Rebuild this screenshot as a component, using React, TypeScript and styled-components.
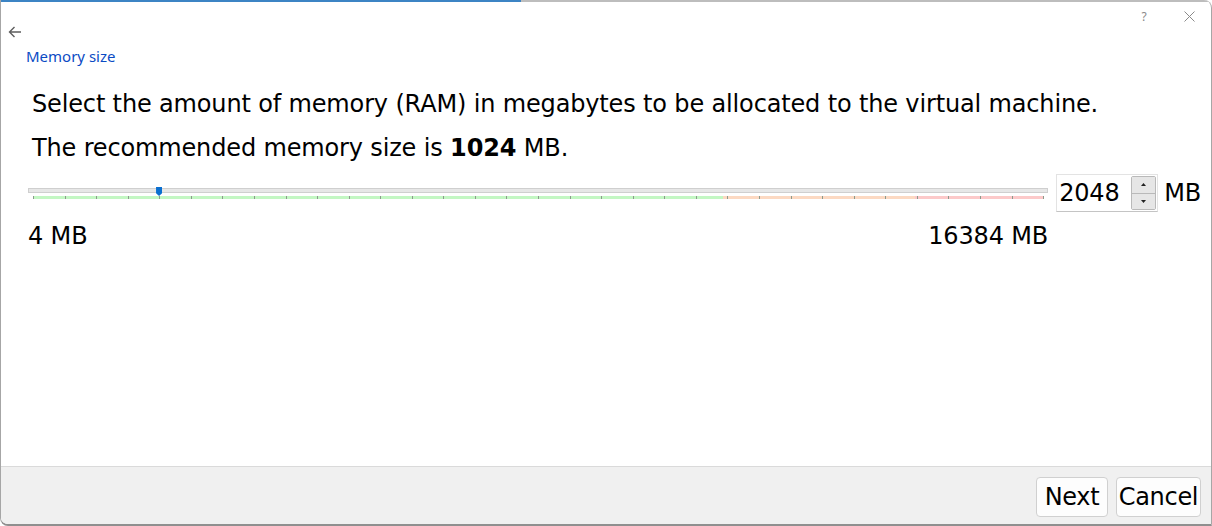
import React from "react";
import styled, { createGlobalStyle } from "styled-components";

const Global = createGlobalStyle`
  html, body { margin: 0; padding: 0; background: #ffffff; }
  body { width: 1212px; height: 526px; overflow: hidden; }
  * { box-sizing: border-box; }
`;

const FONT = `"DejaVu Sans", sans-serif`;

const Page = styled.div`
  width: 1212px;
  height: 526px;
  display: flex;
  flex-direction: column;
  background: #ffffff;
`;

const Dialog = styled.div`
  flex: 1;
  display: flex;
  flex-direction: column;
  border-left: 1px solid #a6a6a6;
  border-right: 1px solid #a6a6a6;
  border-bottom: 2px solid #8f8f8f;
  border-top-right-radius: 8px;
  border-bottom-left-radius: 8px;
  overflow: hidden;
  background: #ffffff;
`;

const TopStrip = styled.div`
  height: 2px;
  display: flex;
  flex: none;
`;

const StripPart = styled.div<{ $color: string; $w?: number }>`
  height: 100%;
  background: ${(p) => p.$color};
  ${(p) => (p.$w ? `width: ${p.$w}px; flex: none;` : "flex: 1;")}
`;

const TitleBar = styled.div`
  height: 36px;
  display: flex;
  flex: none;
  padding: 0 0 0 7px;
`;

const BackButton = styled.div`
  align-self: flex-end;
  width: 14px;
  height: 12px;
  display: flex;
  align-items: center;
`;

const Spacer = styled.div`
  flex: 1;
`;

const TitleButton = styled.div<{ $w: number; $gap?: number }>`
  align-self: flex-start;
  margin-top: 5px;
  margin-right: ${(p) => p.$gap ?? 0}px;
  width: ${(p) => p.$w}px;
  height: 18px;
  display: flex;
  align-items: center;
  justify-content: center;
  color: #8a8a8a;
  font-family: "Noto Sans", sans-serif;
  font-size: 12px;
`;

const PageTitle = styled.div`
  margin: 8px 0 0 25px;
  font-family: "Noto Sans", "Open Sans", sans-serif;
  font-size: 15px;
  line-height: 20px;
  color: #0b4bc4;
`;

const Content = styled.div`
  flex: 1;
  padding: 20px 10px 0 27px;
  font-family: ${FONT};
  font-size: 24px;
  letter-spacing: -0.15px;
  color: #000000;
`;

const Para = styled.p`
  margin: 0 0 8px 4px;
  line-height: 36px;
  b { font-weight: bold; }
`;

const EditorRow = styled.div`
  display: flex;
  align-items: flex-start;
  margin-top: 5px;
`;

const SliderColumn = styled.div`
  flex: 1;
  display: flex;
  flex-direction: column;
  margin-right: 8px;
`;

const Slider = styled.div`
  position: relative;
  height: 38px;
`;

const Track = styled.div`
  position: absolute;
  left: 0;
  right: 0;
  top: 14px;
  height: 5px;
  background: #e7e7e7;
  border: 1px solid #cfcfcf;
`;

const Scale = styled.div`
  position: absolute;
  left: 5px;
  right: 5px;
  top: 22px;
  height: 3px;
`;

const ThumbLane = styled.div`
  position: absolute;
  left: 5px;
  right: 5px;
  top: 13px;
  height: 9px;
`;

const Zone = styled.div<{ $color: string }>`
  position: absolute;
  top: 0;
  height: 3px;
  background: ${(p) => p.$color};
`;

const Tick = styled.div`
  position: absolute;
  top: 0;
  width: 1px;
  height: 3px;
  background: #8c9a8c;
`;

const Thumb = styled.div`
  position: absolute;
  top: 0;
  width: 6px;
  height: 9px;
  margin-left: -3px;
  background: #0a6fd0;
  clip-path: polygon(0 0, 100% 0, 100% 70%, 50% 100%, 0 70%);
`;

const Labels = styled.div`
  display: flex;
  justify-content: space-between;
  line-height: 30px;
  margin-top: 9px;
`;

const SpinBox = styled.div`
  width: 102px;
  height: 38px;
  display: flex;
  align-items: center;
  border: 1px solid #e3e3e3;
  border-bottom-color: #c4c4c4;
  padding: 1px 1px 1px 2px;
  background: #ffffff;
`;

const SpinValue = styled.div`
  flex: 1;
  line-height: 34px;
`;

const SpinButtons = styled.div`
  width: 25px;
  height: 34px;
  display: flex;
  flex-direction: column;
  border: 1px solid #b9b9b9;
  border-radius: 2px;
  overflow: hidden;
`;

const SpinButton = styled.div<{ $top?: boolean }>`
  flex: 1;
  display: flex;
  align-items: center;
  justify-content: center;
  background: #e6e6e6;
  ${(p) => (p.$top ? "border-bottom: 1px solid #b9b9b9;" : "")}
`;

const Unit = styled.div`
  margin-left: 6px;
  line-height: 38px;
`;

const Footer = styled.div`
  height: 58px;
  flex: none;
  display: flex;
  justify-content: flex-end;
  align-items: flex-start;
  gap: 8px;
  padding: 10px 10px 0 0;
  background: #f0f0f0;
  border-top: 1px solid #dadada;
`;

const Button = styled.button<{ $w: number }>`
  width: ${(p) => p.$w}px;
  height: 40px;
  padding: 0;
  font-family: ${FONT};
  font-size: 24px;
  letter-spacing: -0.3px;
  color: #000;
  background: #fdfdfd;
  border: 1px solid #d0d0d0;
  border-radius: 4px;
`;

const MIN = 4;
const MAX = 16384;
const VALUE = 2048;
const GREEN_END = 11200;
const PEACH_END = 14300;
const TICKS = 33;

const pct = (v: number) => ((v - MIN) / (MAX - MIN)) * 100;

export default function App() {
  const ticks = Array.from({ length: TICKS }, (_, i) => (i / (TICKS - 1)) * 100);
  return (
    <>
      <Global />
      <Page>
        <Dialog>
          <TopStrip>
            <StripPart $color="#3c84c4" $w={520} />
            <StripPart $color="#bdbdbd" />
          </TopStrip>
          <TitleBar>
            <BackButton>
              <svg width="14" height="12" viewBox="0 0 14 12">
                <path d="M6.5 1 L1.5 6 L6.5 11 M1.5 6 H13" fill="none" stroke="#5e5e5e" strokeWidth="1.4" />
              </svg>
            </BackButton>
            <Spacer />
            <TitleButton $w={16} $gap={15}>?</TitleButton>
            <TitleButton $w={44}>
              <svg width="11" height="11" viewBox="0 0 11 11">
                <path d="M0.5 0.5 L10.5 10.5 M10.5 0.5 L0.5 10.5" stroke="#8a8a8a" strokeWidth="1" />
              </svg>
            </TitleButton>
          </TitleBar>
          <PageTitle>Memory size</PageTitle>
          <Content>
            <Para>Select the amount of memory (RAM) in megabytes to be allocated to the virtual machine.</Para>
            <Para>
              The recommended memory size is <b>1024</b> MB.
            </Para>
            <EditorRow>
              <SliderColumn>
                <Slider>
                  <Track />
                  <Scale>
                    <Zone $color="#c3f7c3" style={{ left: 0, width: `${pct(GREEN_END)}%` }} />
                    <Zone
                      $color="#fcd9c2"
                      style={{ left: `${pct(GREEN_END)}%`, width: `${pct(PEACH_END) - pct(GREEN_END)}%` }}
                    />
                    <Zone $color="#fcc9c9" style={{ left: `${pct(PEACH_END)}%`, right: 0 }} />
                    {ticks.map((t) => (
                      <Tick key={t} style={{ left: `${t}%` }} />
                    ))}
                  </Scale>
                  <ThumbLane>
                    <Thumb style={{ left: `${pct(VALUE)}%` }} />
                  </ThumbLane>
                </Slider>
                <Labels>
                  <span>4 MB</span>
                  <span>16384 MB</span>
                </Labels>
              </SliderColumn>
              <SpinBox>
                <SpinValue>2048</SpinValue>
                <SpinButtons>
                  <SpinButton $top>
                    <svg width="5" height="3" viewBox="0 0 5 3">
                      <path d="M0 3 L2.5 0 L5 3 Z" fill="#222" />
                    </svg>
                  </SpinButton>
                  <SpinButton>
                    <svg width="5" height="3" viewBox="0 0 5 3">
                      <path d="M0 0 L2.5 3 L5 0 Z" fill="#222" />
                    </svg>
                  </SpinButton>
                </SpinButtons>
              </SpinBox>
              <Unit>MB</Unit>
            </EditorRow>
          </Content>
          <Footer>
            <Button $w={72}>Next</Button>
            <Button $w={85}>Cancel</Button>
          </Footer>
        </Dialog>
      </Page>
    </>
  );
}
